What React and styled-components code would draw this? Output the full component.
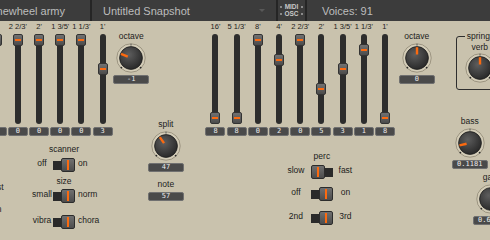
import React, { useId } from "react";
import styled, { createGlobalStyle } from "styled-components";

const ORANGE = "#fb6a10";
const BEIGE = "#c9c2ad";

const GlobalStyle = createGlobalStyle`
  *, *::before, *::after { box-sizing: border-box; }
  html, body { margin: 0; padding: 0; background: ${BEIGE}; overflow: hidden; }
  body { font-family: "Liberation Sans", Arial, sans-serif; color: #1c1c1c; }
`;

const Screen = styled.div`
  width: 490px;
  height: 240px;
  overflow: hidden;
  background: ${BEIGE};
  display: flex;
  flex-direction: column;
`;

/* ---------- top bar ---------- */

const TopBar = styled.div`
  flex: 0 0 21px;
  height: 21px;
  display: flex;
  background: #3c3c3c;
  color: #bcbcbc;
  font-size: 11px;
  white-space: nowrap;
`;

const PresetName = styled.div`
  flex: 0 0 90px;
  display: flex;
  align-items: center;
  justify-content: flex-end;
  padding-right: 25px;
  overflow: hidden;
`;

const BarCell = styled.div`
  flex: ${(p) => (p.$w ? `0 0 ${p.$w}px` : "1")};
  display: flex;
  align-items: center;
  border-left: 2px solid #252525;
  padding-left: ${(p) => p.$pad || 0}px;
`;

const DropArrow = styled.span`
  margin-left: auto;
  margin-right: 11px;
  width: 0;
  height: 0;
  border-left: 3px solid transparent;
  border-right: 3px solid transparent;
  border-top: 3px solid #585858;
`;

const LinkStatus = styled(BarCell)`
  justify-content: center;
  gap: 2px;
`;

const LedColumn = styled.div`
  display: flex;
  flex-direction: column;
  gap: 5px;
  & > i {
    display: block;
    width: 2px;
    height: 2px;
    background: #8a8a8a;
  }
`;

const LinkText = styled.div`
  font-size: 6.5px;
  line-height: 6.5px;
  font-weight: bold;
  color: #c8c8c8;
  text-align: center;
`;

/* ---------- panel ---------- */

const Panel = styled.div`
  display: flex;
  align-items: flex-start;
  margin-left: -77.5px;
  padding-top: 1px;
`;

const Manual = styled.div`
  flex: 0 0 auto;
  display: flex;
  flex-direction: column;
  margin-left: ${(p) => p.$ml || 0}px;
`;

const ManualTop = styled.div`
  display: flex;
  align-items: flex-start;
`;

const DrawbarBank = styled.div`
  display: flex;
`;

const DrawbarCol = styled.div`
  flex: 0 0 21.2px;
  width: 21.2px;
  display: flex;
  flex-direction: column;
  align-items: center;
`;

const DrawbarLabel = styled.div`
  height: 10px;
  line-height: 10px;
  font-size: 7.5px;
  white-space: nowrap;
`;

const Track = styled.div`
  margin-top: 2px;
  width: 6px;
  height: 90px;
  border-radius: 3px;
  background: #2d2d2d;
  display: flex;
  flex-direction: column;
  align-items: center;
`;

const Handle = styled.div`
  flex: 0 0 12px;
  width: 10px;
  height: 12px;
  border-radius: 2px;
  border: 1px solid #333;
  background: linear-gradient(#717171, #4b4b4b);
  display: flex;
  align-items: center;
  justify-content: center;
  &::after {
    content: "";
    width: 6px;
    height: 2px;
    background: ${ORANGE};
  }
`;

const ValueBox = styled.div`
  width: ${(p) => p.$w || 36}px;
  height: 9px;
  margin-top: ${(p) => p.$mt ?? 2}px;
  border: 1px solid #707070;
  border-radius: 2px;
  background: #4a4a4a;
  color: #ececec;
  font-family: "DejaVu Sans Mono", "Liberation Mono", monospace;
  font-size: 7px;
  line-height: 7px;
  display: flex;
  align-items: center;
  justify-content: center;
`;

const KnobColumn = styled.div`
  flex: 0 0 36px;
  width: 36px;
  display: flex;
  flex-direction: column;
  align-items: center;
  margin-top: ${(p) => p.$mt || 0}px;
  margin-left: ${(p) => p.$ml || 0}px;
`;

const Caption = styled.div`
  height: 10px;
  line-height: 10px;
  font-size: 8.5px;
  white-space: nowrap;
  margin-top: ${(p) => p.$mt || 0}px;
`;

const KnobFace = styled.svg`
  display: block;
  margin-top: ${(p) => p.$mt ?? 2}px;
`;

/* ---------- switches ---------- */

const BottomRow = styled.div`
  display: flex;
  align-items: flex-start;
  margin-top: 8px;
  padding-left: ${(p) => p.$pl || 0}px;
`;

const CutLabels = styled.div`
  flex: 0 0 41px;
  padding-top: 38px;
  display: flex;
  flex-direction: column;
  gap: 12px;
  font-size: 8.5px;
  line-height: 10px;
  white-space: nowrap;
`;

const CutLabel = styled.span`
  margin-left: ${(p) => p.$ml || 0}px;
`;

const SwitchGroup = styled.div`
  display: flex;
  flex-direction: column;
  margin-left: ${(p) => p.$ml || 0}px;
  margin-top: ${(p) => p.$mt || 0}px;
`;

const GroupTitle = styled.div`
  width: 22px;
  height: 10px;
  margin-left: ${(p) => p.$indent}px;
  margin-top: ${(p) => p.$mt || 0}px;
  display: flex;
  justify-content: center;
  font-size: 8.5px;
  line-height: 10px;
  white-space: nowrap;
`;

const SwitchRow = styled.div`
  display: flex;
  align-items: center;
  height: 14px;
  margin-top: ${(p) => p.$mt || 0}px;
`;

const SideLabel = styled.span`
  flex: 0 0 ${(p) => p.$w}px;
  width: ${(p) => p.$w}px;
  text-align: ${(p) => p.$align || "center"};
  padding-left: ${(p) => p.$pl || 0}px;
  margin: 0 ${(p) => p.$mr || 0}px 4px ${(p) => p.$mlft || 0}px;
  font-size: 8.5px;
  line-height: 10px;
  white-space: nowrap;
`;

const Toggle = styled.div`
  flex: 0 0 22px;
  width: 22px;
  height: 14px;
  display: flex;
  align-items: center;
  justify-content: ${(p) => (p.$on ? "flex-end" : "flex-start")};
  background: linear-gradient(#2a2a2a, #2a2a2a) center / 100% 9px no-repeat;
`;

const ToggleCap = styled.div`
  width: 14px;
  height: 14px;
  border-radius: 2px;
  border: 1px solid #2c2c2c;
  background: linear-gradient(#707070, #4c4c4c);
  display: flex;
  align-items: center;
  justify-content: center;
  &::after {
    content: "";
    width: 2px;
    height: 10px;
    background: ${ORANGE};
  }
`;

/* ---------- right side ---------- */

const RightColumn = styled.div`
  flex: 0 0 auto;
  display: flex;
  flex-direction: column;
  margin-left: 21px;
`;

const SpringFrame = styled.fieldset`
  width: 80px;
  margin: 9px 0 0 0;
  padding: 0 0 6px 5px;
  border: 1px solid #2e2e2e;
  border-radius: 3px;
  display: flex;
  flex-direction: column;
  align-items: flex-start;
`;

const FrameLegend = styled.legend`
  margin-left: 3px;
  padding: 0 2px;
  font-size: 8.5px;
  line-height: 10px;
`;

/* ---------- pieces ---------- */

function Knob({ angle, mt }) {
  const id = useId().replace(/:/g, "");
  const a = ((angle - 90) * Math.PI) / 180;
  const px = (r) => 15 + r * Math.cos(a);
  const py = (r) => 15 + r * Math.sin(a);
  const dot = (deg) => {
    const t = ((deg - 90) * Math.PI) / 180;
    return { cx: 15 + 13.6 * Math.cos(t), cy: 15 + 13.6 * Math.sin(t) };
  };
  return (
    <KnobFace width="30" height="30" viewBox="0 0 30 30" $mt={mt}>
      <defs>
        <radialGradient id={`kb${id}`} cx="40%" cy="35%" r="70%">
          <stop offset="0" stopColor="#5e5e5e" />
          <stop offset="1" stopColor="#262626" />
        </radialGradient>
      </defs>
      <circle cx="15" cy="15" r="14.2" fill="#d4cdb8" stroke="#8e8773" strokeWidth="0.8" />
      <circle cx="15" cy="15" r="11.4" fill={`url(#kb${id})`} stroke="#1c1c1c" strokeWidth="0.8" />
      <circle {...dot(-135)} r="0.9" fill="#2a2a2a" />
      <circle {...dot(135)} r="0.9" fill="#2a2a2a" />
      <line x1="15" y1="0.8" x2="15" y2="2.6" stroke="#3a3a3a" strokeWidth="0.8" />
      <line x1={px(3.5)} y1={py(3.5)} x2={px(10.8)} y2={py(10.8)} stroke={ORANGE} strokeWidth="2.4" />
    </KnobFace>
  );
}

function KnobBlock({ label, value, angle, mt, ml }) {
  return (
    <KnobColumn $mt={mt} $ml={ml}>
      <Caption>{label}</Caption>
      <Knob angle={angle} />
      <ValueBox>{value}</ValueBox>
    </KnobColumn>
  );
}

const FEET = ["16'", "5 1/3'", "8'", "4'", "2 2/3'", "2'", "1 3/5'", "1 1/3'", "1'"];

function Drawbars({ values }) {
  return (
    <DrawbarBank>
      {FEET.map((f, i) => (
        <DrawbarCol key={f}>
          <DrawbarLabel>{f}</DrawbarLabel>
          <Track>
            <Handle style={{ marginTop: (values[i] / 8) * 78 }} />
          </Track>
          <ValueBox $w={20} $mt={3}>{values[i]}</ValueBox>
        </DrawbarCol>
      ))}
    </DrawbarBank>
  );
}

function Switch({ left, right, on, mt, cells }) {
  return (
    <SwitchRow $mt={mt}>
      <SideLabel $w={cells.lw} $mr={cells.lgap}>{left}</SideLabel>
      <Toggle $on={on}>
        <ToggleCap />
      </Toggle>
      <SideLabel $w={cells.rw} $mlft={cells.rgap} $align={cells.ralign} $pl={cells.rpl}>
        {right}
      </SideLabel>
    </SwitchRow>
  );
}

const SCANNER_CELLS = { lw: 22, lgap: 0, rw: 30, rgap: 0, rpl: 3, ralign: "left" };
const PERC_CELLS = { lw: 24, lgap: 3, rw: 23, rgap: 1, rpl: 0, ralign: "center" };

export default function App() {
  return (
    <Screen>
      <GlobalStyle />
      <TopBar>
        <PresetName>
          <span>Tonewheel army</span>
        </PresetName>
        <BarCell $w={186} $pad={11}>
          Untitled Snapshot
          <DropArrow />
        </BarCell>
        <LinkStatus $w={29}>
          <LedColumn>
            <i />
            <i />
          </LedColumn>
          <LinkText>
            MIDI
            <br />
            OSC
          </LinkText>
          <LedColumn>
            <i />
            <i />
          </LedColumn>
        </LinkStatus>
        <BarCell $pad={15}>Voices: 91</BarCell>
      </TopBar>

      <Panel>
        <Manual>
          <ManualTop>
            <Drawbars values={[8, 8, 6, 0, 0, 0, 0, 0, 3]} />
            <KnobBlock label="octave" value="-1" angle={-67.5} mt={9} />
          </ManualTop>
          <BottomRow $pl={67.5}>
            <CutLabels>
              <CutLabel>fast</CutLabel>
              <CutLabel $ml={2}>on</CutLabel>
            </CutLabels>
            <SwitchGroup>
              <GroupTitle $indent={22}>scanner</GroupTitle>
              <Switch left="off" right="on" on mt={4} cells={SCANNER_CELLS} />
              <GroupTitle $indent={22} $mt={4}>size</GroupTitle>
              <Switch left="small" right="norm" on mt={3} cells={SCANNER_CELLS} />
              <Switch left="vibra" right="chora" on mt={12} cells={SCANNER_CELLS} />
            </SwitchGroup>
          </BottomRow>
        </Manual>

        <KnobColumn $mt={97} $ml={-1.3}>
          <Caption>split</Caption>
          <Knob angle={-35} />
          <ValueBox>47</ValueBox>
          <Caption $mt={7}>note</Caption>
          <ValueBox $mt={3}>57</ValueBox>
        </KnobColumn>

        <Manual $ml={21}>
          <ManualTop>
            <Drawbars values={[8, 8, 0, 2, 0, 5, 3, 1, 8]} />
            <KnobBlock label="octave" value="0" angle={0} mt={9} ml={3.2} />
          </ManualTop>
          <SwitchGroup $ml={79} $mt={15}>
            <GroupTitle $indent={27}>perc</GroupTitle>
            <Switch left="slow" right="fast" mt={4} cells={PERC_CELLS} />
            <Switch left="off" right="on" on mt={8} cells={PERC_CELLS} />
            <Switch left="2nd" right="3rd" on mt={10} cells={PERC_CELLS} />
          </SwitchGroup>
        </Manual>

        <RightColumn>
          <SpringFrame>
            <FrameLegend>spring</FrameLegend>
            <KnobColumn>
              <Caption $mt={1}>verb</Caption>
              <Knob angle={0} mt={1} />
            </KnobColumn>
          </SpringFrame>
          <KnobBlock label="bass" value="0.1181" angle={-103} mt={26} ml={-4} />
          <KnobBlock label="gain" value="0.6500" angle={40} mt={3} ml={17} />
        </RightColumn>
      </Panel>
    </Screen>
  );
}
